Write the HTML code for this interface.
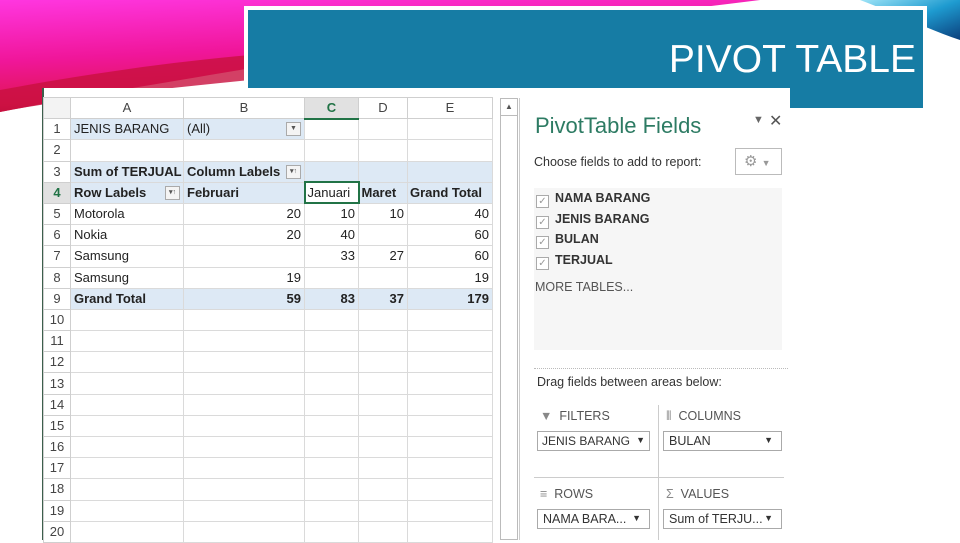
<!DOCTYPE html><html><head><style>
*{margin:0;padding:0;box-sizing:border-box}
body{width:960px;height:540px;position:relative;overflow:hidden;background:#fff;font-family:"Liberation Sans",sans-serif}
.a{position:absolute}
.c{font-size:13px;color:#222}
table{border-collapse:collapse;table-layout:fixed;width:449px}
td{height:21.2px;border:1px solid #dadada;padding:0 3px;white-space:nowrap;overflow:hidden;font-size:13px;line-height:18px}
td.h{text-align:center;color:#444;background:#fff;border-color:#cfcfcf;padding:0}
.bl td.x{background:#dde9f5}
.r{text-align:right}
.b{font-weight:bold}
.dd{display:inline-block;width:15px;height:14px;border:1px solid #aaa;background:#f4f4f4;vertical-align:middle;font-size:7px;text-align:center;line-height:12px;color:#555;float:right;margin-top:2px}
.pf{font-size:12.5px;color:#333}
.box{position:absolute;height:20px;border:1px solid #aaa;background:#fff;font-size:12.5px;padding:2px 5px;color:#333;white-space:nowrap}
.box span{position:absolute;right:8px;top:3px;font-size:9px}
.cb{display:inline-block;width:13px;height:13px;border:1px solid #aaa;background:#fff;font-size:10px;line-height:11px;text-align:center;color:#999;vertical-align:-2px;margin-right:6px;font-weight:normal}
</style></head><body>
<svg class="a" style="left:0;top:0" width="960" height="130">
<defs><linearGradient id="p" x1="0" y1="0" x2="0.3" y2="1"><stop offset="0" stop-color="#ff36e0"/><stop offset="0.5" stop-color="#f0169a"/><stop offset="0.85" stop-color="#e01556"/><stop offset="1" stop-color="#9a0c28"/></linearGradient>
<linearGradient id="bl" x1="0" y1="0" x2="1" y2="1"><stop offset="0" stop-color="#9fe4f7"/><stop offset="0.5" stop-color="#1e9bd0"/><stop offset="1" stop-color="#0b3f7c"/></linearGradient></defs>
<path d="M0,0 L760,0 C600,20 400,40 240,70 C150,85 60,100 0,112 Z" fill="url(#p)"/>
<path d="M0,90 C80,75 170,62 250,55 L250,80 C150,90 60,100 0,112Z" fill="#c8103e" opacity="0.8"/>
<path d="M860,0 L960,0 L960,40 C930,30 900,15 860,0Z" fill="url(#bl)"/>
</svg>
<div class="a" style="left:244px;top:6px;width:683px;height:106px;background:#fff"></div>
<div class="a" style="left:248px;top:10px;width:675px;height:98px;background:#167ca4"></div>
<div class="a" style="left:600px;top:38px;width:316px;text-align:right;color:#fff;font-size:39px">PIVOT TABLE</div>
<div class="a" style="left:42px;top:88px;width:748px;height:452px;background:#fff;border-left:2px solid #3c5f4c"></div>
<div class="a c" style="left:43px;top:97px">
<table>
<colgroup><col style="width:27px"><col style="width:113px"><col style="width:121px"><col style="width:54px"><col style="width:49px"><col style="width:85px"></colgroup>
<tr><td class="h" style="background:#f3f3f3"></td><td class="h">A</td><td class="h">B</td><td class="h b" style="background:#e1e1e1;color:#217346;border-bottom:2px solid #217346">C</td><td class="h">D</td><td class="h">E</td></tr>
<tr class="bl"><td class="h">1</td><td class="x">JENIS BARANG</td><td class="x">(All)<span class="dd">▼</span></td><td></td><td></td><td></td></tr>
<tr><td class="h">2</td><td></td><td></td><td></td><td></td><td></td></tr>
<tr class="bl b"><td class="h" style="font-weight:normal">3</td><td class="x">Sum of TERJUAL</td><td class="x">Column Labels<span class="dd">▾↑</span></td><td class="x"></td><td class="x"></td><td class="x"></td></tr>
<tr class="bl b"><td class="h" style="color:#217346;background:#e1e1e1">4</td><td class="x">Row Labels<span class="dd">▾↑</span></td><td class="x">Februari</td><td class="x" style="font-weight:normal;border:2px solid #217346;background:#fff;padding:0 2px">Januari</td><td class="x" style="padding:0 2px">Maret</td><td class="x" style="padding:0 2px">Grand Total</td></tr>
<tr><td class="h">5</td><td>Motorola</td><td class="r">20</td><td class="r">10</td><td class="r">10</td><td class="r">40</td></tr>
<tr><td class="h">6</td><td>Nokia</td><td class="r">20</td><td class="r">40</td><td></td><td class="r">60</td></tr>
<tr><td class="h">7</td><td>Samsung</td><td></td><td class="r">33</td><td class="r">27</td><td class="r">60</td></tr>
<tr><td class="h">8</td><td>Samsung</td><td class="r">19</td><td></td><td></td><td class="r">19</td></tr>
<tr class="bl b"><td class="h" style="font-weight:normal">9</td><td class="x">Grand Total</td><td class="x r">59</td><td class="x r">83</td><td class="x r">37</td><td class="x r">179</td></tr>
<tr><td class="h">10</td><td></td><td></td><td></td><td></td><td></td></tr>
<tr><td class="h">11</td><td></td><td></td><td></td><td></td><td></td></tr>
<tr><td class="h">12</td><td></td><td></td><td></td><td></td><td></td></tr>
<tr><td class="h">13</td><td></td><td></td><td></td><td></td><td></td></tr>
<tr><td class="h">14</td><td></td><td></td><td></td><td></td><td></td></tr>
<tr><td class="h">15</td><td></td><td></td><td></td><td></td><td></td></tr>
<tr><td class="h">16</td><td></td><td></td><td></td><td></td><td></td></tr>
<tr><td class="h">17</td><td></td><td></td><td></td><td></td><td></td></tr>
<tr><td class="h">18</td><td></td><td></td><td></td><td></td><td></td></tr>
<tr><td class="h">19</td><td></td><td></td><td></td><td></td><td></td></tr>
<tr><td class="h">20</td><td></td><td></td><td></td><td></td><td></td></tr>
</table></div>
<div class="a" style="left:500px;top:98px;width:18px;height:442px;border:1px solid #bbb;border-top:none;background:#fff"></div>
<div class="a" style="left:500px;top:98px;width:18px;height:18px;border:1px solid #bbb;font-size:8px;text-align:center;line-height:16px;color:#555">▲</div>
<div class="a" style="left:519px;top:98px;width:1px;height:442px;background:#ccc"></div>
<div class="a" style="left:535px;top:113px;font-size:22px;color:#2d7b63">PivotTable Fields</div>
<div class="a" style="left:753px;top:114px;font-size:11px;color:#666">▼</div>
<div class="a" style="left:769px;top:111px;font-size:16px;color:#555">✕</div>
<div class="a pf" style="left:534px;top:155px">Choose fields to add to report:</div>
<div class="a" style="left:735px;top:148px;width:47px;height:27px;border:1px solid #bbb;color:#999;font-size:15px;padding:3px 8px">⚙ <span style="font-size:9px">▼</span></div>
<div class="a" style="left:534px;top:188px;width:248px;height:162px;background:#f6f6f6"></div>
<div class="a pf b" style="left:536px;top:188px;line-height:20.5px;color:#333">
<div><span class="cb">✓</span>NAMA BARANG</div>
<div><span class="cb">✓</span>JENIS BARANG</div>
<div><span class="cb">✓</span>BULAN</div>
<div><span class="cb">✓</span>TERJUAL</div>
</div>
<div class="a pf" style="left:535px;top:280px;color:#555">MORE TABLES...</div>
<div class="a" style="left:534px;top:368px;width:254px;border-top:1px dotted #bbb"></div>
<div class="a pf" style="left:537px;top:375px">Drag fields between areas below:</div>
<div class="a" style="left:658px;top:405px;width:1px;height:135px;background:#ccc"></div>
<div class="a" style="left:534px;top:477px;width:250px;height:1px;background:#ccc"></div>
<div class="a pf" style="left:540px;top:409px;color:#555"><span style="color:#888">▼</span>&nbsp; FILTERS</div>
<div class="a pf" style="left:666px;top:409px;color:#555"><span style="color:#888">⦀</span>&nbsp; COLUMNS</div>
<div class="a pf" style="left:540px;top:487px;color:#555"><span style="color:#888">≡</span>&nbsp; ROWS</div>
<div class="a pf" style="left:666px;top:487px;color:#555"><span style="color:#888">Σ</span>&nbsp; VALUES</div>
<div class="box" style="left:537px;top:431px;width:113px;font-size:12px;padding-left:4px">JENIS BARANG<span style="right:4px">▼</span></div>
<div class="box" style="left:663px;top:431px;width:119px">BULAN<span>▼</span></div>
<div class="box" style="left:537px;top:509px;width:113px">NAMA BARA...<span>▼</span></div>
<div class="box" style="left:663px;top:509px;width:119px">Sum of TERJU...<span>▼</span></div>
</body></html>
